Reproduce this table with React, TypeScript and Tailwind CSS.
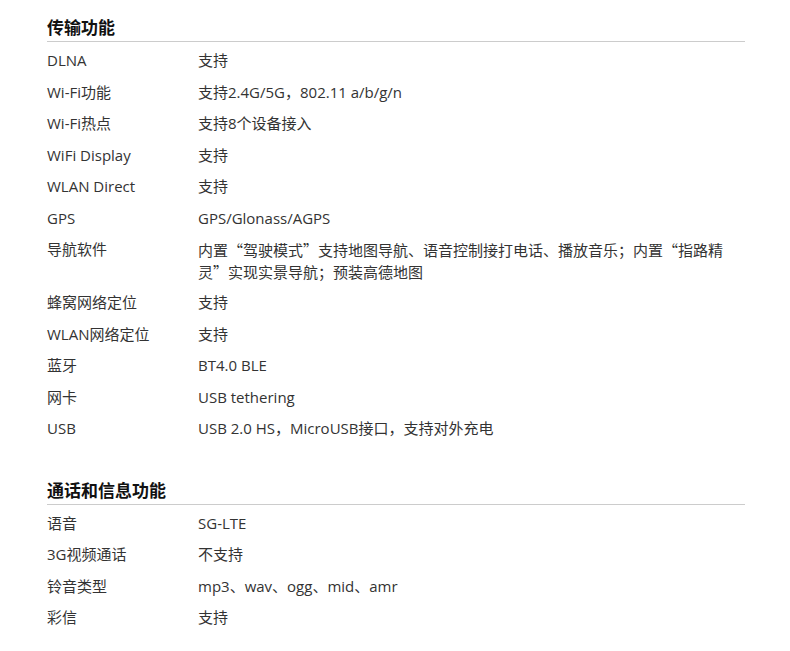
const transfer = [
  ['DLNA', '支持'],
  ['Wi-Fi功能', '支持2.4G/5G，802.11 a/b/g/n'],
  ['Wi-Fi热点', '支持8个设备接入'],
  ['WiFi Display', '支持'],
  ['WLAN Direct', '支持'],
  ['GPS', 'GPS/Glonass/AGPS'],
  ['导航软件', '内置“驾驶模式”支持地图导航、语音控制接打电话、播放音乐；内置“指路精灵”实现实景导航；预装高德地图'],
  ['蜂窝网络定位', '支持'],
  ['WLAN网络定位', '支持'],
  ['蓝牙', 'BT4.0 BLE'],
  ['网卡', 'USB tethering'],
  ['USB', 'USB 2.0 HS，MicroUSB接口，支持对外充电'],
];

const calls = [
  ['语音', 'SG-LTE'],
  ['3G视频通话', '不支持'],
  ['铃音类型', 'mp3、wav、ogg、mid、amr'],
  ['彩信', '支持'],
];

// quotes render full-width only in the CJK face
const cjkOnly = (v: string) => /[“”]/.test(v);

const Section = ({ title, rows, className = '' }: { title: string; rows: string[][]; className?: string }) => (
  <section className={className}>
    <h2 className="text-[17px] leading-[26px] font-bold text-[#111] border-b border-[#cccccc]">
      {title}
    </h2>
    <div className="pt-[3px]">
      {rows.map(([label, value]) => (
        <div key={label} className="flex py-[5px] text-[15px] leading-[21.5px] text-[#333]">
          <div className="w-[151px] shrink-0">{label}</div>
          <div
            className={`w-[525px] ${cjkOnly(value) ? "font-['Noto_Sans_CJK_SC',sans-serif]" : ''}`}
          >
            {value}
          </div>
        </div>
      ))}
    </div>
  </section>
);

export default function App() {
  return (
    <div
      className="bg-white min-h-[651px] pl-[47px] pt-[15px]"
      style={{ fontFamily: '"Open Sans", "Noto Sans CJK SC", sans-serif' }}
    >
      <div className="w-[698px]">
        <Section title="传输功能" rows={transfer} />
        <Section title="通话和信息功能" rows={calls} className="mt-[33px]" />
      </div>
    </div>
  );
}
